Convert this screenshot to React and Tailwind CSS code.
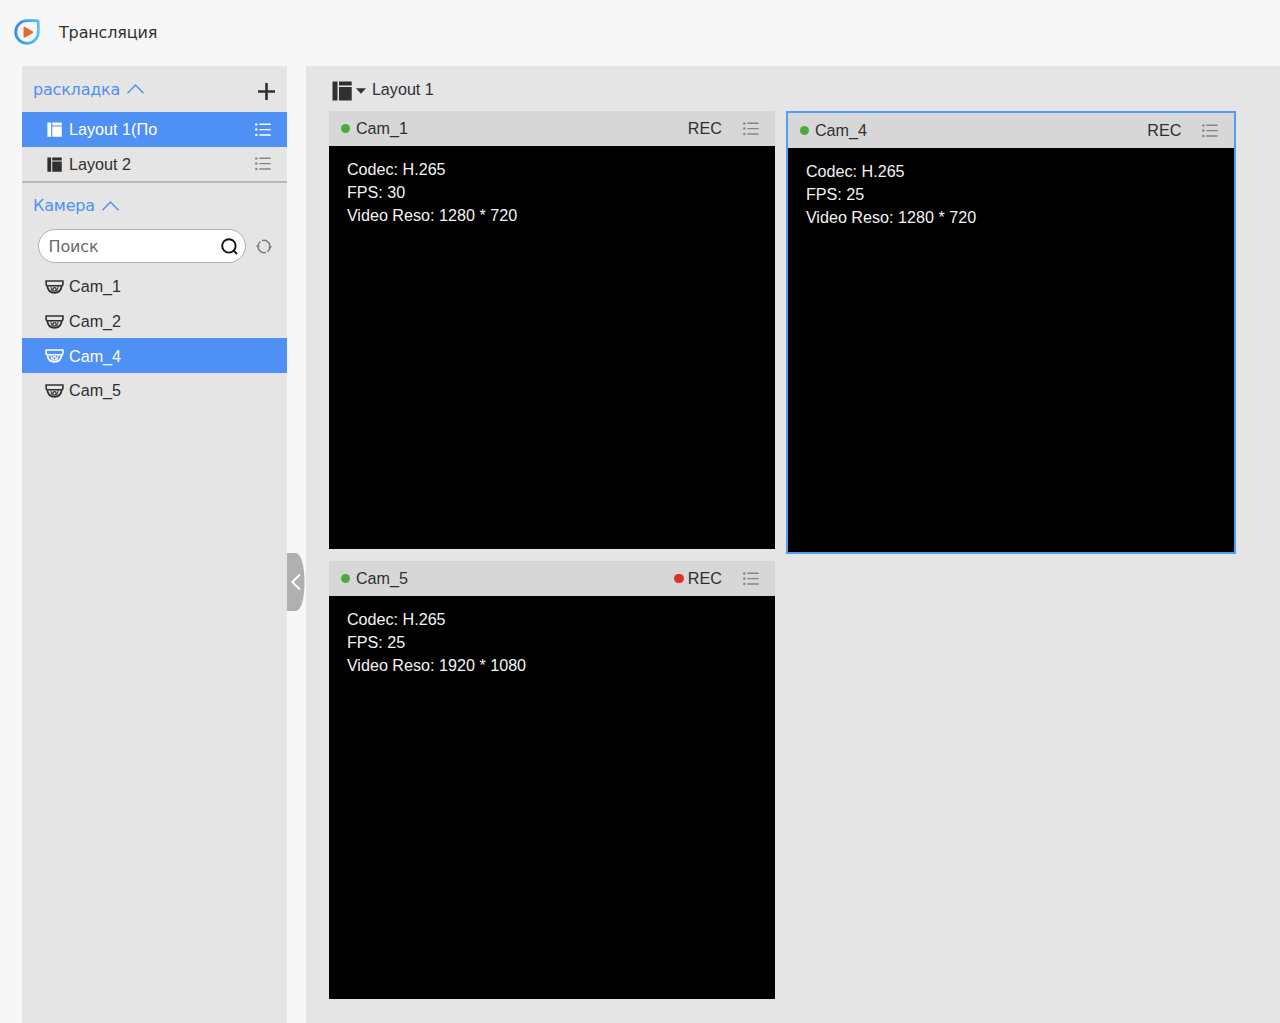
import React from "react";

const latin = "font-['Liberation_Sans',Arial,sans-serif]";

function Logo() {
  return (
    <svg className="h-[26px] w-[26px]" viewBox="0 0 26 26" fill="none">
      <defs>
        <linearGradient id="ring" x1="0" y1="10" x2="26" y2="14" gradientUnits="userSpaceOnUse">
          <stop stopColor="#3d85e4" />
          <stop offset="1" stopColor="#55c8f8" />
        </linearGradient>
      </defs>
      <path d="M13 1.7h9.6q1.7 0 1.7 1.7V13A11.3 11.3 0 1 1 13 1.7Z" stroke="url(#ring)" strokeWidth="2.800" />
      <path d="M10.600 8.900v8.600l7.400-4.300Z" fill="#df6a35" stroke="#df6a35" strokeWidth="2.200" strokeLinejoin="round" />
    </svg>
  );
}

function Chevron() {
  return (
    <svg className="h-[10px] w-[17px]" viewBox="0 0 17 10" fill="none" stroke="currentColor" strokeWidth="1.400">
      <path d="M.5 9.200 8.500 1l8 8.200" />
    </svg>
  );
}

function LayoutIcon({ className }) {
  return (
    <svg className={className} viewBox="0 0 20 20" fill="currentColor">
      <path d="M.5.5h5v19h-5zM7 .5h12.700v4H7zM7 6h12.700v13.500H7z" />
    </svg>
  );
}

function ListIcon({ className }) {
  return (
    <svg className={`h-[14px] w-[16px] ${className}`} viewBox="0 0 16 14" fill="currentColor">
      <path d="M4.300 .6h11.400v1.400H4.300zM4.300 5.900h11.400v1.400H4.300zM4.300 11.300h11.400v1.400H4.300z" />
      <circle cx="1.300" cy="1.400" r="1.250" />
      <circle cx="1.300" cy="6.600" r="1.250" />
      <circle cx="1.300" cy="12" r="1.250" />
    </svg>
  );
}

function CameraIcon() {
  return (
    <svg className="mt-px h-[14px] w-[19px] shrink-0" viewBox="0 0 19 14" fill="none" stroke="currentColor">
      <path d="M1.100 1h16.800v3q0 1.700-1.700 1.700H2.800Q1.100 5.700 1.100 4Z" strokeWidth="1.600" />
      <path d="M2.200 5.600C2.800 10.200 5.500 12.900 9.500 12.900s6.700-2.700 7.300-7.300" strokeWidth="1.800" />
      <path d="M5.800 6.200c.2 2 .7 3.700 1.700 5.200M13.200 6.200c-.2 2-.7 3.700-1.700 5.200" strokeWidth="1" />
      <circle cx="9.500" cy="9.400" r="1.700" strokeWidth="1.300" />
    </svg>
  );
}

function SectionTitle({ children, className }) {
  return (
    <div className={`flex items-center gap-[7px] text-[#4e90f3] ${className}`}>
      <span className="pt-px font-['DejaVu_Sans',sans-serif] text-[16px] leading-5 tracking-[-0.200px]">{children}</span>
      <Chevron />
    </div>
  );
}

function LayoutRow({ label, active }) {
  return (
    <div className={`flex h-[34.500px] items-center pl-[25px] pr-4 text-[16.200px] ${active ? "bg-[#4e90f3] text-white" : "text-[#303030]"}`}>
      <LayoutIcon className="h-[15px] w-[15px]" />
      <span className="ml-[7px] flex-1">{label}</span>
      <ListIcon className={active ? "text-white" : "text-[#858585]"} />
    </div>
  );
}

function CameraRow({ label, active }) {
  return (
    <div className={`flex h-[34.600px] items-center gap-[5px] pl-[23px] text-[16.150px] ${active ? "bg-[#4e90f3] text-white" : "text-[#303030]"}`}>
      <CameraIcon />
      <span>{label}</span>
    </div>
  );
}

function Tile({ name, fps, resolution, recording, className }) {
  return (
    <section className={`flex flex-col ${className}`}>
      <div className="flex h-[35px] shrink-0 items-center bg-[#d7d7d7] pl-[11.500px] pr-[16px] text-[16.150px] text-[#303030]">
        <i className="h-[9.500px] w-[9.500px] rounded-full bg-[#4cab3c]" />
        <span className="ml-[5.500px] flex-1">{name}</span>
        {recording && <i className="mr-1 h-[9.500px] w-[9.500px] rounded-full bg-[#dc3222]" />}
        <span>REC</span>
        <ListIcon className="ml-[21px] text-[#858585]" />
      </div>
      <div className="flex-1 bg-black pl-[17.500px] pt-[12px] text-[16.150px] leading-[23px] text-[#f3f3f3]">
        <p>Codec: H.265</p>
        <p>FPS: {fps}</p>
        <p>Video Reso: {resolution}</p>
      </div>
    </section>
  );
}

export default function App() {
  return (
    <div className={`flex h-[1023px] w-[1280px] flex-col overflow-hidden bg-[#f7f7f7] ${latin}`}>
      <header className="flex h-[66px] shrink-0 items-center pb-[2px] pl-[14px]">
        <Logo />
        <h1 className="ml-[19px] pt-[2px] font-['DejaVu_Sans',sans-serif] text-[16px] tracking-[-0.150px] text-[#303030]">Трансляция</h1>
      </header>
      <div className="flex min-h-0 flex-1 pl-[22px]">
        <aside className="w-[265px] shrink-0 bg-[#e5e5e5]">
          <div className="flex h-[46.300px] items-center justify-between pl-[11px] pr-[12px]">
            <SectionTitle>раскладка</SectionTitle>
            <svg className="mt-[5px] h-[17px] w-[17px]" viewBox="0 0 17 17" stroke="#303030" strokeWidth="2.600">
              <path d="M8.500 0v17M0 8.500h17" />
            </svg>
          </div>
          <LayoutRow label="Layout 1(По" active />
          <LayoutRow label="Layout 2" />
          <div className="h-[1.500px] bg-[#b9b9b9]" />
          <SectionTitle className="h-[46px] pl-[11px]">Камера</SectionTitle>
          <div className="flex items-center pl-4">
            <div className="flex h-[34.500px] w-[208px] items-center justify-between rounded-full border border-[#b0b0b0] bg-white pl-[9.500px] pr-[7px]">
              <span className="pt-px font-['DejaVu_Sans',sans-serif] text-[16px] tracking-[-0.150px] text-[#696969]">Поиск</span>
              <svg className="h-[17px] w-[17px]" viewBox="0 0 17 17" fill="none" stroke="#111" strokeWidth="1.900">
                <circle cx="7.900" cy="7.900" r="6.700" />
                <path d="m12.400 12.400 3.600 3.600" />
              </svg>
            </div>
            <svg className="ml-[9.500px] h-[15px] w-[16px]" viewBox="0 0 16 15" fill="none" stroke="#777" strokeWidth="1.400">
              <path d="M2 7.200A6 6 0 0 1 4.500 2.500M6 1.700a6 6 0 0 1 8 5.300M14 8a6 6 0 0 1-2.500 4.600M10 13.300A6 6 0 0 1 2 8" />
              <path d="M0 7.800h4L2 5ZM12 7.200h4L14 10Z" fill="#777" stroke="none" />
            </svg>
          </div>
          <div className="mt-[6px]">
            <CameraRow label="Cam_1" />
            <CameraRow label="Cam_2" />
            <CameraRow label="Cam_4" active />
            <CameraRow label="Cam_5" />
          </div>
        </aside>
        <div className="w-[19px] shrink-0 pt-[487px]">
          <svg className="h-[58px] w-[18px]" viewBox="0 0 18 58" fill="none">
            <path d="M0 0h8.500C14.500 0 17.500 14 17.500 29S14.500 58 8.500 58H0Z" fill="#b0b0b0" />
            <path d="m13 21.500-7.700 7.500 7.700 7.500" stroke="white" strokeWidth="1.900" />
          </svg>
        </div>
        <main className="min-w-0 flex-1 bg-[#e5e5e5] pl-[23.400px]">
          <div className="flex h-[45px] items-center text-[#303030]">
            <LayoutIcon className="ml-[2.500px] mt-[5px] h-[20px] w-[20px]" />
            <svg className="ml-1 mt-[5px] h-[6px] w-[10px]" viewBox="0 0 10 6" fill="currentColor">
              <path d="M0 .2h10L5 5.800Z" />
            </svg>
            <span className="ml-[6px] mt-[2px] text-[16.150px]">Layout 1</span>
          </div>
          <div className="grid grid-cols-[445.500px_450px] items-start gap-x-[11.500px] gap-y-[7px]">
            <Tile name="Cam_1" fps="30" resolution="1280 * 720" className="h-[438.400px]" />
            <Tile name="Cam_4" fps="25" resolution="1280 * 720" className="h-[443px] border-2 border-[#4f9ff3]" />
            <Tile name="Cam_5" fps="25" resolution="1920 * 1080" recording className="h-[438.400px]" />
          </div>
        </main>
      </div>
    </div>
  );
}
